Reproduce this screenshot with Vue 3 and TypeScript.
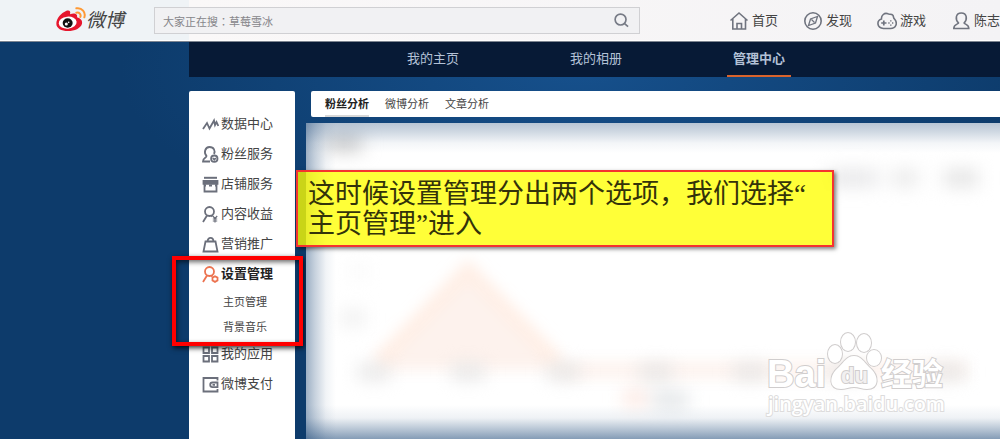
<script setup lang="ts">
interface SideItem {
  icon: string
  label: string
  active?: boolean
  children?: string[]
}

const topLinks = [
  { icon: 'home', label: '首页' },
  { icon: 'compass', label: '发现' },
  { icon: 'game', label: '游戏' },
  { icon: 'user', label: '陈志' },
]

const sections = ['我的主页', '我的相册', '管理中心']
const tabs = ['粉丝分析', '微博分析', '文章分析']

const sideItems: SideItem[] = [
  { icon: 'trend', label: '数据中心' },
  { icon: 'fans', label: '粉丝服务' },
  { icon: 'shop', label: '店铺服务' },
  { icon: 'income', label: '内容收益' },
  { icon: 'bag', label: '营销推广' },
  { icon: 'settings', label: '设置管理', active: true, children: ['主页管理', '背景音乐'] },
  { icon: 'apps', label: '我的应用' },
  { icon: 'wallet', label: '微博支付' },
]

const axisLabels = [68, 162, 257, 350, 444, 540, 642]
</script>

<template>
  <div class="page">
    <header class="topbar">
      <a class="logo" href="#" aria-label="微博">
        <svg class="logo-mark" viewBox="0 0 90 72" aria-hidden="true">
          <path fill="#e6162d" d="M1 50C1 34 16 18 30 12c10-4 15 1 12 10 11-5 24-3 21 9 11 3 17 10 15 19-4 14-22 22-42 22C16 72 1 64 1 50z" />
          <ellipse cx="35" cy="47" rx="27" ry="18" fill="#fff" transform="rotate(-6 35 47)" />
          <ellipse cx="35" cy="48" rx="15" ry="14" fill="#111" />
          <circle cx="31" cy="51" r="4.500" fill="#fff" />
          <circle cx="38" cy="46" r="2.500" fill="#fff" />
          <path fill="none" stroke="#ff9933" stroke-width="6" stroke-linecap="round" d="M61 4c17-3 29 12 24 27M61 17c9-2 15 5 12 13" />
        </svg>
        <span class="logo-text">微博</span>
      </a>
      <form class="search" role="search" @submit.prevent>
        <input type="text" aria-label="搜索" placeholder="大家正在搜：草莓雪冰" />
        <button type="submit" aria-label="搜索">
          <svg viewBox="0 0 16 16" aria-hidden="true">
            <circle cx="7" cy="7" r="5.800" />
            <path d="M11 11l4 3.500" />
          </svg>
        </button>
      </form>
      <nav class="toplinks">
        <a v-for="l in topLinks" :key="l.label" href="#">
          <svg viewBox="0 0 20 20" aria-hidden="true">
            <template v-if="l.icon === 'home'">
              <path d="M1.500 9.500L10 2l8.500 7.500M3.800 8v10h12.700V8M8 17.500v-5h4.500v5" />
            </template>
            <template v-else-if="l.icon === 'compass'">
              <circle cx="10" cy="10" r="8.200" />
              <path d="M14.500 5.500l-2 6.500-7 2.500L7.500 8zM8.500 8.500l3 3" stroke-width="1.300" />
            </template>
            <template v-else-if="l.icon === 'game'">
              <path d="M4.500 8C4 4.500 7.500 1.200 11 2.800c1 1 3.500-.3 4.700 1.200C17 5.500 16 7 17.500 8c3.500 4 1.500 9.500-4 9.500H6.500C-.5 17-.5 9.500 4.500 8z" />
              <path d="M4.200 12h5.300M6.800 9.400v5.200" stroke-width="1.700" />
              <path d="M13.800 9.200v1.300M13.800 13.500v1.300M11.300 12h1.300M15 12h1.300" stroke-width="1.400" />
            </template>
            <template v-else>
              <path d="M7.500 12C4 8.500 4.500 2 10.300 2s6.300 6.500 2.800 10c.5 1.500 4.700 1 4.700 5.500H2.800c0-4.500 4.200-4 4.700-5.500z" />
            </template>
          </svg>
          <span>{{ l.label }}</span>
        </a>
      </nav>
    </header>

    <nav class="sections">
      <a v-for="s in sections" :key="s" href="#" :class="{ active: s === '管理中心' }">{{ s }}</a>
    </nav>

    <main class="body">
      <aside class="sidebar">
        <ul>
          <li v-for="item in sideItems" :key="item.label" :class="{ group: item.children }">
            <a href="#" class="side-link" :class="{ active: item.active }">
              <svg viewBox="0 0 17 17" aria-hidden="true">
                <path v-if="item.icon === 'trend'" d="M1 13l4-6 2.500 5.500L12 4.500l1 4.500 1.500-3 1.800 4" />
                <template v-else-if="item.icon === 'fans'">
                  <path d="M8 15.500H1c0-4 3.500-3.500 3.500-5.500C1.500 7 3 1 7.500 1s6 4 4.500 7" />
                  <circle cx="12.300" cy="12.700" r="3.200" />
                  <path d="M10.800 12l1.500 1.600 1.500-1.600" />
                </template>
                <template v-else-if="item.icon === 'shop'">
                  <path d="M2 1.800h13" stroke-width="2" />
                  <path d="M1.500 4.800h14v3h-14z" fill="currentColor" />
                  <path d="M2.500 8v7.500h12V8M2.500 9.500h1.500M7 9.500h3M13 9.500h1.500" />
                </template>
                <template v-else-if="item.icon === 'income'">
                  <circle cx="7.500" cy="5.500" r="4.500" />
                  <path d="M5 9.500L1 16M9.500 9.500l1 1" />
                  <path d="M10.800 10l2.200 2.500 2.200-2.500M13 12.500v4M10.800 13h4.400M10.800 15h4.400" stroke-width="1.200" />
                </template>
                <path v-else-if="item.icon === 'bag'" d="M3.500 5.500h10l2 10h-14zM5.500 6C5.500.5 11.500.5 11.500 6" />
                <template v-else-if="item.icon === 'settings'">
                  <circle cx="7.500" cy="5.500" r="4.500" />
                  <path d="M5 9.500L1 16M9.500 9.500l1 1" />
                  <path d="M13 10.200l2.500 1.400v2.900L13 15.900l-2.500-1.400v-2.900z" />
                </template>
                <path v-else-if="item.icon === 'apps'" d="M1.500 1.500h5.500v5.500H1.500zM10 1.500h5.500v5.500H10zM1.500 10h5.500v5.500H1.500zM10 10h5.500v5.500H10z" />
                <path v-else d="M15.500 4.500V2h-14v13.500h14V13M15.500 6.500h-5a2.300 2.300 0 0 0 0 4.600h5zM10.500 8.800h2.500" />
              </svg>
              <span>{{ item.label }}</span>
            </a>
            <ul v-if="item.children" class="sub">
              <li v-for="c in item.children" :key="c"><a href="#">{{ c }}</a></li>
            </ul>
            <span v-if="item.children" class="marker"></span>
          </li>
        </ul>
      </aside>

      <section class="content">
        <nav class="tabs">
          <a v-for="(t, i) in tabs" :key="t" href="#" :class="{ active: i === 0 }">{{ t }}</a>
        </nav>
        <div class="panel">
          <svg class="chart" aria-hidden="true">
            <g class="plot">
              <path d="M68 247L162 147l95 100z" fill="#fdf2ed" />
              <path d="M72 240L162 147l90 93" fill="none" stroke="#ffefe6" stroke-width="16" />
              <path d="M250 247h410" fill="none" stroke="#fdf3ee" stroke-width="16" />
            </g>
            <g class="labels">
              <rect x="20" y="13" width="36" height="15" fill="#c8c8c8" />
              <rect x="522" y="47" width="50" height="16" fill="#e6e6e8" />
              <rect x="586" y="47" width="26" height="16" fill="#e8e8e8" />
              <rect x="638" y="47" width="34" height="16" fill="#e2e2e2" />
              <rect x="46" y="144" width="14" height="9" fill="#f3f3f3" />
              <rect x="36" y="188" width="22" height="14" fill="#ececec" />
              <rect v-for="x in axisLabels" :key="x" :x="x - 16" y="242" width="32" height="14" fill="#e4e4e4" />
              <rect x="318" y="268" width="22" height="14" fill="#fce3db" />
              <rect x="346" y="270" width="36" height="14" fill="#dce0e3" />
            </g>
          </svg>
          <div class="haze"></div>
          <svg class="watermark" viewBox="0 0 184 90" aria-hidden="true">
            <g class="outlined">
              <ellipse cx="69" cy="24" rx="7" ry="9" />
              <ellipse cx="82" cy="12" rx="7" ry="9" />
              <ellipse cx="98" cy="13" rx="7" ry="9" />
              <ellipse cx="108" cy="28" rx="7" ry="8" />
              <path d="M88 26c7 0 10 6 15 11 11 9 10 22-2 22-5 0-8-2-13-2s-8 2-13 2c-12 0-13-13-2-22 5-5 8-11 15-11z" />
              <text class="wm-latin" x="1" y="57">Bai</text>
              <text class="wm-du" x="75" y="53">du</text>
              <text class="wm-cjk" x="115" y="55">经验</text>
              <text class="wm-url" x="2" y="81">jingyan.baidu.com</text>
            </g>
          </svg>
          <p class="callout">这时候设置管理分出两个选项，我们选择“<br />主页管理”进入</p>
        </div>
      </section>
    </main>
  </div>
</template>

<style>
body {
  margin: 0;
}
</style>

<style scoped>
.page {
  display: flex;
  flex-direction: column;
  min-height: 100vh;
  overflow: hidden;
  font-family: "Noto Sans CJK SC", sans-serif;
  font-size: 13px;
  color: #444;
  background: radial-gradient(ellipse 460px 180px at 58% 70px, #16508c, #0d3b6b);
}
a {
  color: inherit;
  text-decoration: none;
}
ul {
  list-style: none;
  margin: 0;
  padding: 0;
}
.topbar {
  display: flex;
  align-items: center;
  box-sizing: border-box;
  height: 42px;
  padding-left: 56px;
  border-bottom: 1px solid #7d8591;
  box-shadow: inset 0 -1px #fff;
  background: linear-gradient(to right, #eff3f6 189px, #faf8f8 189px, #f4f3f5);
}
.logo {
  display: flex;
  align-items: center;
  flex: none;
  width: 98px;
  padding-bottom: 4px;
}
.logo-mark {
  width: 30px;
  height: 24px;
}
.logo-text {
  font-size: 19px;
  line-height: 24px;
  font-style: italic;
  color: #444;
}
.search {
  display: flex;
  flex: 1;
  box-sizing: border-box;
  height: 27px;
  margin-right: 89px;
  border: 1px solid #d0d0d3;
  background: #f1f1f3;
}
.search input {
  flex: 1;
  min-width: 0;
  padding: 0 8px;
  border: 0;
  outline: 0;
  background: none;
  font-family: "Noto Sans CJK TC", sans-serif;
  font-size: 11px;
}
.search input::placeholder {
  color: #86868a;
  opacity: 1;
}
.search button {
  display: grid;
  place-items: center;
  width: 36px;
  padding: 0;
  border: 0;
  background: none;
}
.search svg {
  width: 15px;
  height: 15px;
  fill: none;
  stroke: #777b86;
  stroke-width: 1.8;
}
.toplinks {
  display: flex;
  flex: none;
  gap: 25px;
  width: 271px;
  overflow: hidden;
}
.toplinks a {
  display: flex;
  align-items: center;
  flex: none;
  gap: 3px;
  line-height: 20px;
}
.toplinks svg {
  width: 20px;
  height: 20px;
  fill: none;
  stroke: #70747f;
  stroke-width: 1.6;
}
.toplinks span {
  padding-bottom: 2px;
}
.sections {
  display: flex;
  gap: 99px;
  height: 35px;
  margin-left: 189px;
  padding-left: 212px;
  background: #071a36;
  color: #b3c1d6;
}
.sections a {
  box-sizing: border-box;
  padding: 0 6px;
  line-height: 32px;
}
.sections .active {
  border-bottom: 2px solid #d9632c;
  font-weight: bold;
}
.body {
  display: flex;
  flex: 1;
  gap: 16px;
  padding: 14px 0 0 189px;
}
.sidebar {
  flex: none;
  box-sizing: border-box;
  width: 106px;
  padding-top: 18px;
  border-radius: 2px 2px 0 0;
  background: #fff;
}
.side-link {
  display: flex;
  align-items: center;
  gap: 2px;
  height: 30px;
  padding-left: 13px;
}
.side-link span {
  padding-bottom: 3px;
}
.side-link svg {
  width: 17px;
  height: 17px;
  fill: none;
  stroke: currentColor;
  stroke-width: 1.8;
  color: #6b6f7b;
}
.side-link.active {
  font-weight: bold;
  color: #222;
}
.side-link.active svg {
  color: #ec7350;
}
.group {
  position: relative;
}
.sub li {
  padding-left: 34px;
  font-size: 11px;
  line-height: 25px;
}
.marker {
  position: absolute;
  inset: -3px -8px -7px -17px;
  border: 4px solid #f00;
  box-shadow: 1px 2px 5px rgba(0, 0, 0, 0.8), inset 1px 2px 5px rgba(0, 0, 0, 0.6);
  pointer-events: none;
}
.content {
  display: flex;
  flex: 1;
  flex-direction: column;
  min-width: 0;
}
.tabs {
  display: flex;
  gap: 16px;
  height: 26px;
  padding-left: 14px;
  border-radius: 2px 0 0 2px;
  background: #fff;
  font-size: 11px;
}
.tabs a {
  box-sizing: border-box;
  line-height: 25px;
}
.tabs .active {
  border-bottom: 2px solid #d8d8d8;
  font-weight: bold;
  color: #222;
}
.panel {
  position: relative;
  flex: 1;
  margin: 6px 0 0 -5px;
  min-height: 316px;
  background: #fff;
}
.chart {
  position: absolute;
  inset: 0;
  width: 100%;
  height: 100%;
}
.plot {
  filter: blur(7px);
}
.labels {
  filter: blur(9px);
}
.haze {
  position: absolute;
  inset: 0;
  background:
    linear-gradient(to bottom, rgba(20, 65, 115, 0.3), rgba(20, 65, 115, 0.2) 9px, rgba(20, 65, 115, 0.05) 20px, transparent 30px),
    linear-gradient(to right, rgba(20, 65, 115, 0.42), rgba(20, 65, 115, 0.24) 9px, rgba(20, 65, 115, 0.06) 20px, transparent 30px),
    linear-gradient(to top, rgba(20, 65, 115, 0.52), rgba(20, 65, 115, 0.32) 9px, rgba(20, 65, 115, 0.07) 21px, transparent 34px);
}
.watermark {
  position: absolute;
  right: 50px;
  bottom: 19px;
  width: 184px;
  height: 90px;
  overflow: visible;
}
.outlined {
  fill: #fff;
  stroke: #d0cdcd;
  stroke-width: 2;
  paint-order: stroke;
}
.wm-latin {
  font: bold 38px "Liberation Sans", sans-serif;
}
.wm-du {
  font: bold 22px "Liberation Sans", sans-serif;
  fill: #f2f0f0;
}
.wm-cjk {
  font: bold 31px "Noto Sans CJK SC", sans-serif;
}
.wm-url {
  font: 600 20px "Open Sans", sans-serif;
  stroke: #dddcdc;
}
.callout {
  position: absolute;
  top: 47px;
  left: -10px;
  box-sizing: border-box;
  width: 538px;
  margin: 0;
  padding: 7px 0 6px 10px;
  border: 2px solid #f5332f;
  background: rgba(255, 255, 0, 0.78);
  box-shadow: 2px 2px 4px rgba(0, 0, 0, 0.5);
  font-family: "Liberation Serif", "Noto Sans CJK SC", serif;
  font-size: 27px;
  line-height: 30px;
  color: #33330a;
  white-space: nowrap;
}
</style>
